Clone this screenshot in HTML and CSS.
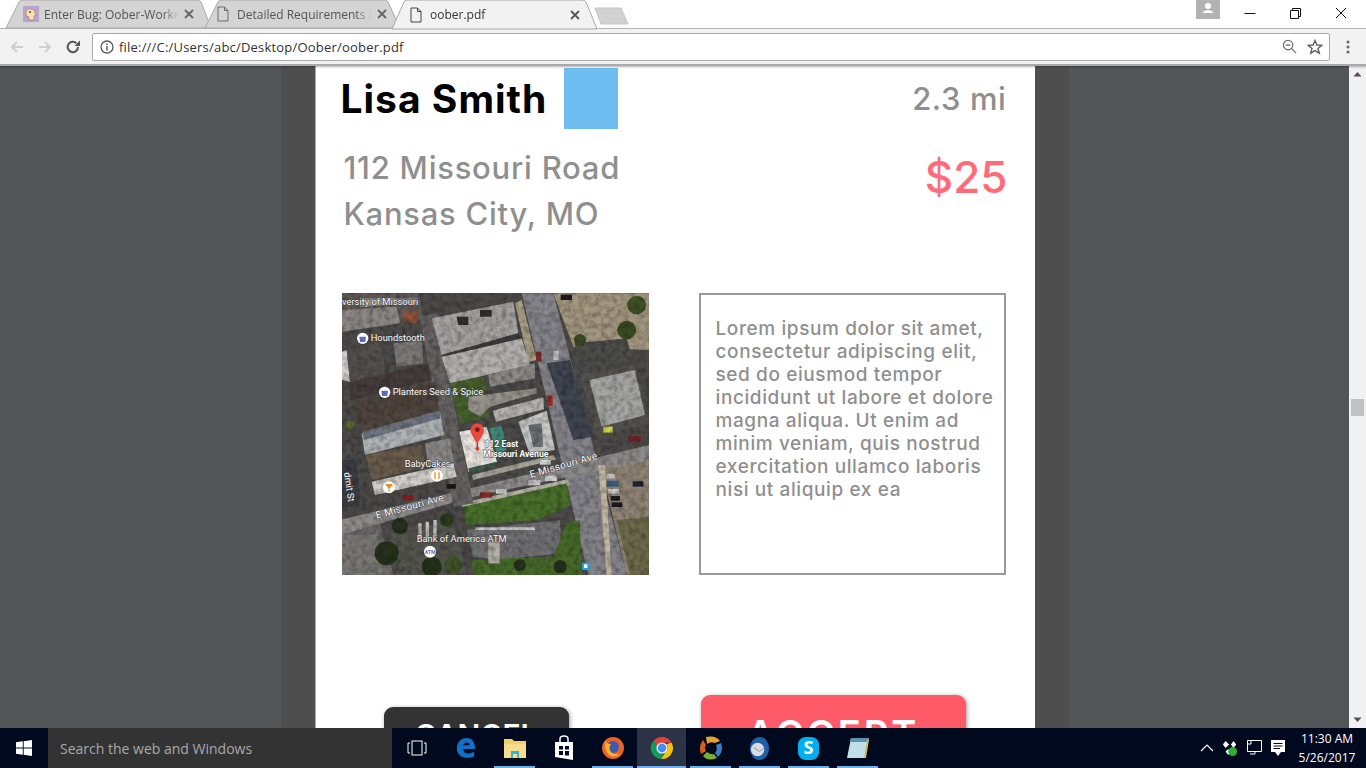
FILE: index.html
```html
<!DOCTYPE html>
<html lang="en">
<head>
    <meta charset="UTF-8">
    <title>oober.pdf</title>
    <link rel="stylesheet" href="styles.css">
</head>
<body>
    <div class="tabstrip">
        <div class="tab tab-first">
            <svg class="tab-shape" viewBox="0 0 205 28" preserveAspectRatio="none"><path d="M0 28 L13 2 Q14 0 17 0 L191 0 Q194 0 195 2 L205 28 Z" fill="#d4d4d4" stroke="#a8a8a8"/></svg>
            <svg class="favicon" viewBox="0 0 16 16"><rect width="16" height="16" fill="#b9a3cf"/><path d="M3 8 Q3 2 8 3 Q12 3 12 7 L13 9 L11 10 L11 14 L6 14 L6 11 Q3 11 3 8Z" fill="#f6e3b4" stroke="#a8743c" stroke-width=".6"/><circle cx="7" cy="6" r="1" fill="#50402c"/></svg>
            <span class="tab-title">Enter Bug: Oober-Worker</span>
            <svg class="tab-close" viewBox="0 0 10 10"><path d="M1 1 L9 9 M9 1 L1 9" stroke="#666" stroke-width="1.800"/></svg>
        </div>
        <div class="tab tab-second">
            <svg class="tab-shape" viewBox="0 0 195 28" preserveAspectRatio="none"><path d="M0 28 L13 2 Q14 0 17 0 L179 0 Q182 0 183 2 L195 28 Z" fill="#d4d4d4" stroke="#a8a8a8"/></svg>
            <svg class="doc-icon" viewBox="0 0 12 16"><path d="M1 1 H7.500 L11 4.500 V15 H1 Z M7.500 1 V4.500 H11" fill="none" stroke="#6c6c6c"/></svg>
            <span class="tab-title">Detailed Requirements Do</span>
            <svg class="tab-close tab-close-second" viewBox="0 0 10 10"><path d="M1 1 L9 9 M9 1 L1 9" stroke="#666" stroke-width="1.800"/></svg>
        </div>
        <div class="tab tab-active">
            <svg class="tab-shape" viewBox="0 0 205 29" preserveAspectRatio="none"><path d="M0 29 L12 2 Q13 0 16 0 L190 0 Q193 0 194 2 L205 29 Z" fill="#f2f2f2" stroke="#a8a8a8"/></svg>
            <svg class="doc-icon" viewBox="0 0 12 16"><path d="M1 1 H7.500 L11 4.500 V15 H1 Z M7.500 1 V4.500 H11" fill="none" stroke="#444"/></svg>
            <span class="tab-title tab-title-active">oober.pdf</span>
            <svg class="tab-close" viewBox="0 0 10 10"><path d="M1 1 L9 9 M9 1 L1 9" stroke="#555" stroke-width="1.800"/></svg>
        </div>
        <svg class="newtab" viewBox="0 0 35 18"><path d="M1 1 H27 L34 17 H7 Z" fill="#d2d2d2" stroke="#c4c4c4"/></svg>
        <div class="window-controls">
            <div class="profile"><svg viewBox="0 0 24 19" width="24" height="19"><circle cx="12" cy="6" r="3" fill="#fff"/><path d="M7 12 Q12 8 17 12 V13 H7 Z" fill="#fff"/></svg></div>
            <svg class="winbtn" viewBox="0 0 46 28"><path d="M18.500 13.500 H29.500" stroke="#111" stroke-width="1"/></svg>
            <svg class="winbtn" viewBox="0 0 46 28"><path d="M18.500 10.500 H26.500 V18.500 H18.500 Z M20.500 10 V8.500 H28.500 V16.500 H27" fill="none" stroke="#111"/></svg>
            <svg class="winbtn" viewBox="0 0 46 28"><path d="M18 8 L28 18 M28 8 L18 18" stroke="#111" stroke-width="1"/></svg>
        </div>
    </div>

    <div class="toolbar">
        <svg class="nav-icon" viewBox="0 0 16 16"><path d="M14 8 H3 M8 3 L3 8 L8 13" fill="none" stroke="#cfcfcf" stroke-width="2"/></svg>
        <svg class="nav-icon" viewBox="0 0 16 16"><path d="M2 8 H13 M8 3 L13 8 L8 13" fill="none" stroke="#cfcfcf" stroke-width="2"/></svg>
        <svg class="nav-icon" viewBox="0 0 16 16"><path d="M13 8 A5.200 5.200 0 1 1 11.400 4.200" fill="none" stroke="#555" stroke-width="2"/><path d="M9.500 7 H15 V1.500 Z" fill="#555"/></svg>
        <div class="omnibox">
            <svg class="info-icon" viewBox="0 0 14 14"><circle cx="7" cy="7" r="6" fill="none" stroke="#5a5a5a" stroke-width="1.300"/><path d="M7 6 V10.500 M7 3.500 V5" stroke="#5a5a5a" stroke-width="1.500"/></svg>
            <span class="url">file:///C:/Users/abc/Desktop/Oober/oober.pdf</span>
            <svg class="zoom-icon" viewBox="0 0 16 16"><circle cx="6.500" cy="6.500" r="5" fill="none" stroke="#6a6a6a" stroke-width="1.300"/><path d="M4 6.500 H9 M10 10 L15 15" stroke="#6a6a6a" stroke-width="1.300"/></svg>
            <svg class="star-icon" viewBox="0 0 16 16"><path d="M8 1.500 L9.900 6 L14.800 6.300 L11 9.400 L12.300 14.200 L8 11.600 L3.700 14.200 L5 9.400 L1.200 6.300 L6.100 6 Z" fill="none" stroke="#5f5f5f" stroke-width="1.400"/></svg>
        </div>
        <svg class="menu-icon" viewBox="0 0 4 16"><circle cx="2" cy="3" r="1.500" fill="#666"/><circle cx="2" cy="8" r="1.500" fill="#666"/><circle cx="2" cy="13" r="1.500" fill="#666"/></svg>
    </div>

    <div class="viewer">
        <div class="viewer-center">
            <div class="gutter"></div>
            <div class="paper">
                <div class="head-row">
                    <div class="name">Lisa Smith</div>
                    <div class="avatar"></div>
                    <div class="distance">2.3 mi</div>
                </div>
                <div class="address-row">
                    <div class="address">112 Missouri Road<br>Kansas City, MO</div>
                    <div class="price">$25</div>
                </div>
                <div class="detail-row">
                    <svg class="map" viewBox="6 9 921 846" width="307" height="282">
                        <defs>
                            <filter id="soft"><feGaussianBlur stdDeviation="1.600"/></filter>
                            <filter id="grain" x="0" y="0" width="100%" height="100%">
                                <feTurbulence type="fractalNoise" baseFrequency=".06" numOctaves="3" seed="7"/>
                                <feColorMatrix type="matrix" values="0 0 0 0 0  0 0 0 0 0  0 0 0 0 0  1.500 1.500 0 0 -1.200"/>
                                <feGaussianBlur stdDeviation="1.500"/>
                            </filter>
                        </defs>
                        <g filter="url(#soft)">
                            <rect x="0" y="0" width="940" height="860" fill="#4e4c4a"/>
                            <!-- lots -->
                            <path d="M640 10 H927 V180 L700 170 Z" fill="#a3977f"/>
                            <path d="M780 520 L927 500 V855 H860 Z" fill="#8f8474"/>
                            <path d="M830 690 L927 680 V855 H870 Z" fill="#6c6a4b"/>
                            <path d="M0 700 H120 L160 855 H0 Z" fill="#6d6b69"/>
                            <!-- roads -->
                            <path d="M545 10 H640 L860 855 H745 Z" fill="#85848a"/>
                            <path d="M620 220 L690 210 L760 440 L700 450 Z" fill="#3f4450"/>
                            <path d="M0 690 L927 465 V510 L400 620 L0 735 Z" fill="#8d8c8b"/>
                            <path d="M360 640 L682 568 L692 585 L372 655 Z" fill="#b5b2a8"/>
                            <path d="M395 555 L640 495 L648 508 L400 570 Z" fill="#a8a59b"/>
                            <path d="M775 525 L800 855 H815 L795 525 Z" fill="#c2b9a3"/>
                            <path d="M240 80 L290 70 L400 640 L340 650 Z" fill="#666462"/>
                            <path d="M0 735 H110 L130 855 H0 Z" fill="#7a7875"/>
                            <path d="M525 40 L545 30 L590 210 L565 215 Z" fill="#a89f86"/>
                            <!-- top centre roofs -->
                            <path d="M275 85 L520 35 L535 130 L305 195 Z" fill="#a5a3a1"/>
                            <path d="M305 200 L545 145 L570 225 L330 280 Z" fill="#b3b1ae"/>
                            <path d="M445 255 L585 220 L585 265 L450 290 Z" fill="#8d8b88"/>
                            <path d="M350 80 H385 V105 H355 Z M420 60 H455 V80 H420 Z" fill="#2e2d2c"/>
                            <path d="M305 195 L535 130 L545 145 L305 200 Z" fill="#3e3d3b"/>
                            <path d="M330 280 L430 260 L450 380 L360 400 Z" fill="#46622f"/>
                            <path d="M385 320 L590 295 L590 310 L450 350 L420 380 L385 360 Z" fill="#97948d"/>
                            <path d="M6 10 H240 L245 90 L6 120 Z" fill="#625a54"/>
                            <path d="M60 25 H230 V40 L60 50 Z" fill="#8e8c8a"/>
                            <path d="M6 60 L170 50 L180 100 L6 125 Z" fill="#8b8885"/>
                            <path d="M190 65 L235 65 L230 100 L195 95 Z" fill="#95513c"/>
                            <!-- left row of buildings -->
                            <path d="M6 185 L20 180 L30 275 L6 270 Z" fill="#cfcfcf"/>
                            <path d="M20 180 L125 155 L135 245 L30 275 Z" fill="#55514e"/>
                            <path d="M160 160 L245 150 L250 220 L170 230 Z" fill="#7b7976"/>
                            <path d="M20 280 L265 220 L275 270 L35 330 Z" fill="#443e3a"/>
                            <path d="M35 340 L285 275 L295 335 L50 395 Z" fill="#4f443e"/>
                            <path d="M50 395 L290 330 L300 365 L60 425 Z" fill="#514740"/>
                            <path d="M65 430 L300 365 L312 435 L75 495 Z" fill="#aeb3b6"/>
                            <path d="M66 425 L298 362 L302 385 L72 450 Z" fill="#6e7580"/>
                            <path d="M78 495 L245 465 L255 530 L95 570 Z" fill="#6b5c4d"/>
                            <path d="M255 460 L330 445 L340 515 L265 525 Z" fill="#8b8a88"/>
                            <path d="M95 575 L340 520 L350 560 L105 615 Z" fill="#d2cfca"/>
                            <path d="M6 510 H50 L62 650 H6 Z" fill="#3a3d42"/>
                            <!-- pin building -->
                            <path d="M358 425 L440 410 L472 520 L385 545 Z" fill="#ece6e2"/>
                            <path d="M385 535 L472 515 L475 528 L388 548 Z" fill="#3d5b4c"/>
                            <path d="M448 415 L486 408 L500 480 L470 490 Z" fill="#3f8a7a"/>
                            <path d="M458 362 L610 322 L612 358 L468 395 Z" fill="#b6b4b0"/>
                            <path d="M535 395 L620 362 L645 480 L568 490 Z" fill="#c7c9c9"/>
                            <path d="M565 405 L605 400 L610 470 L580 472 Z" fill="#6c6f73"/>
                            <!-- right building -->
                            <path d="M705 160 L860 145 L880 220 L715 240 Z" fill="#4d4d4c"/>
                            <path d="M720 250 L890 225 L925 400 L770 440 Z" fill="#55534f"/>
                            <path d="M748 270 L885 240 L915 375 L785 410 Z" fill="#a5a6a4"/>
                            <rect x="790" y="410" width="28" height="18" fill="#cfd64a"/>
                            <!-- green and lot -->
                            <path d="M370 650 L680 580 L692 645 L590 690 L380 705 Z" fill="#4a7029"/>
                            <path d="M150 720 L340 690 L380 855 H170 Z" fill="#55544f"/>
                            <path d="M380 720 L660 690 L665 790 L470 810 L400 800 Z" fill="#717072"/>
                            <path d="M395 810 L640 800 L680 700 L720 690 L725 855 H400 Z" fill="#466b2b"/>
                            <rect x="445" y="755" width="34" height="65" fill="#b5b1a9"/>
                            <!-- trees -->
                            <circle cx="140" cy="790" r="36" fill="#26331c"/>
                            <circle cx="320" cy="690" r="20" fill="#2a3a1d"/>
                            <circle cx="180" cy="708" r="24" fill="#26331c"/>
                            <circle cx="275" cy="830" r="30" fill="#26331c"/>
                            <circle cx="340" cy="825" r="26" fill="#3f5226"/>
                            <circle cx="860" cy="120" r="28" fill="#3a4d22"/>
                            <circle cx="890" cy="45" r="28" fill="#3f5226"/>
                            <circle cx="720" cy="150" r="18" fill="#3a4d22"/>
                            <circle cx="540" cy="825" r="18" fill="#26331c"/>
                            <circle cx="660" cy="830" r="20" fill="#26331c"/>
                            <circle cx="30" cy="405" r="12" fill="#5c6a2c"/>
                            <!-- cars -->
                            <rect x="188" y="615" width="32" height="16" fill="#8c1c22"/>
                            <rect x="420" y="607" width="36" height="16" fill="#8c2a2a"/>
                            <rect x="468" y="597" width="32" height="14" fill="#c9c9c9"/>
                            <rect x="565" y="570" width="36" height="16" fill="#d0d0d0"/>
                            <rect x="615" y="557" width="36" height="16" fill="#cfcfcf"/>
                            <rect x="600" y="510" width="32" height="14" fill="#e0e0e0"/>
                            <rect x="622" y="316" width="16" height="32" fill="#9c2a2a"/>
                            <rect x="588" y="185" width="16" height="30" fill="#7b2a2a"/>
                            <rect x="640" y="182" width="16" height="28" fill="#b9bcc0"/>
                            <rect x="600" y="40" width="20" height="32" fill="#9a9a9a"/>
                            <rect x="865" y="438" width="38" height="16" fill="#6e2427"/>
                            <rect x="800" y="572" width="36" height="18" fill="#3c5f80"/>
                            <rect x="800" y="552" width="24" height="14" fill="#bfbfbf"/>
                            <rect x="805" y="597" width="32" height="14" fill="#d0d0d0"/>
                            <rect x="812" y="618" width="28" height="14" fill="#1c1c1c"/>
                            <rect x="878" y="574" width="32" height="16" fill="#1e2530"/>
                            <rect x="815" y="637" width="32" height="14" fill="#1c1c1c"/>
                            <rect x="662" y="14" width="34" height="16" fill="#1e1e1e"/>
                            <rect x="320" y="582" width="28" height="14" fill="#1c1c1c"/>
                            <path d="M405 712 H585 V720 H405 Z" fill="#c9c9c9"/>
                            <path d="M240 700 V745 M262 695 V745 M285 690 V740" stroke="#c0c0c0" stroke-width="10"/>
                        </g>
                        <rect class="map-grain" x="6" y="9" width="921" height="846" filter="url(#grain)"/>
                        <circle cx="68" cy="145" r="17" fill="#fff"/><path d="M58 140 H78 L76 156 H60 Z" fill="#5c6bc0"/>
                        <circle cx="134" cy="307" r="17" fill="#fff"/><path d="M124 302 H144 L142 318 H126 Z" fill="#5c6bc0"/>
                        <circle cx="291" cy="557" r="18" fill="#fff"/><path d="M285 547 V567 M297 547 V567" stroke="#ef8a1e" stroke-width="4"/>
                        <circle cx="147" cy="592" r="18" fill="#fff"/><path d="M137 583 H157 L147 595 Z M147 595 V606" fill="#ef8a1e" stroke="#ef8a1e" stroke-width="3"/>
                        <circle cx="270" cy="785" r="18" fill="#fff"/><text class="map-atm" x="270" y="791" text-anchor="middle">ATM</text>
                        <rect x="726" y="818" width="22" height="22" rx="3" fill="#1fa5e0"/><rect x="732" y="823" width="10" height="11" fill="#fff"/>
                        <path d="M412 481 V450" stroke="#b92d25" stroke-width="4"/><circle cx="412" cy="476" r="6" fill="#d9382c"/>
                        <path d="M412 462 C400 440 392 432 392 420 A20 20 0 1 1 432 420 C432 432 424 440 412 462Z" fill="#e8493d"/>
                        <circle cx="412" cy="419" r="7" fill="#7c1a14"/>
                        <text class="map-label" x="6" y="44">versity of Missouri</text>
                        <text class="map-label" x="92" y="152">Houndstooth</text>
                        <text class="map-label" x="158" y="316">Planters Seed &amp; Spice</text>
                        <text class="map-label" x="194" y="530">BabyCakes</text>
                        <text class="map-label" x="230" y="755">Bank of America ATM</text>
                        <text class="map-label map-label-bold" x="433" y="470">112 East</text>
                        <text class="map-label map-label-bold" x="430" y="500">Missouri Avenue</text>
                        <text class="map-label map-label-road" transform="translate(110 686) rotate(-15)">E Missouri Ave</text>
                        <text class="map-label map-label-road" transform="translate(572 564) rotate(-16)">E Missouri Ave</text>
                        <text class="map-label" transform="translate(12 548) rotate(82)">dmit St</text>
                    </svg>
                    <div class="notes">Lorem ipsum dolor sit amet, consectetur adipiscing elit, sed do eiusmod tempor incididunt ut labore et dolore magna aliqua. Ut enim ad minim veniam, quis nostrud exercitation ullamco laboris nisi ut aliquip ex ea</div>
                </div>
                <div class="button-row">
                    <div class="btn btn-cancel">CANCEL</div>
                    <div class="btn btn-accept">ACCEPT</div>
                </div>
            </div>
            <div class="gutter"></div>
        </div>
        <div class="scrollbar">
            <svg class="scroll-arrow" viewBox="0 0 17 17"><path d="M4.500 10.500 L8.500 6 L12.500 10.500 Z" fill="#505050"/></svg>
            <div class="scroll-track"><div class="scroll-thumb"></div></div>
            <svg class="scroll-arrow" viewBox="0 0 17 17"><path d="M4.500 6.500 L8.500 11 L12.500 6.500 Z" fill="#505050"/></svg>
        </div>
    </div>

    <div class="taskbar">
        <div class="start"><svg viewBox="0 0 16 16" width="16" height="16"><path d="M0 2.300 L6.800 1.300 V7.500 H0 Z M7.700 1.200 L16 0 V7.500 H7.700 Z M0 8.500 H6.800 V14.700 L0 13.700 Z M7.700 8.500 H16 V16 L7.700 14.800 Z" fill="#fff"/></svg></div>
        <div class="search">Search the web and Windows</div>
        <div class="task-icons">
            <div class="task-item"><svg viewBox="0 0 20 16" width="20" height="16"><rect x="5" y="1" width="10" height="14" fill="none" stroke="#fff"/><path d="M3 3 H1 V13 H3 M17 3 H19 V13 H17" fill="none" stroke="#fff"/></svg></div>
            <div class="task-item"><svg viewBox="0 0 22 24" width="20" height="24"><path d="M1 13 C1 4 7 1 12 1 C18 1 21 6 21 13 H8 C8 18 14 20 20 16 V21 C12 25 1 22 1 13 Z M8 9 H15 C15 5 9 5 8 9 Z" fill="#0f72c8"/></svg></div>
            <div class="task-item task-open"><svg viewBox="0 0 22 22" width="22" height="22"><path d="M0 2 H8 L10 4 H22 V21 H0 Z" fill="#f2cf6b"/><path d="M0 7 H22 V21 H0 Z" fill="#f7dd8c"/><path d="M7 14 H15 V21 H7 Z" fill="#2fb4e0"/><path d="M9 17 H13 V21 H9Z" fill="#f7dd8c"/></svg></div>
            <div class="task-item"><svg viewBox="0 0 20 26" width="20" height="26"><path d="M1 7 H19 V25 L1 22 Z" fill="#fff"/><path d="M6 7 V4 Q6 1 10 1 Q14 1 14 4 V7" fill="none" stroke="#fff" stroke-width="1.500"/><path d="M5 11 H9 V14.500 H5 Z M11 11 H15 V14.500 H11 Z M5 16 H9 V20 H5 Z M11 16 H15 V20.500 H11 Z" fill="#01091f"/></svg></div>
            <div class="task-item task-open"><svg viewBox="0 0 24 24" width="24" height="24"><circle cx="12" cy="12" r="11" fill="#e8622a"/><circle cx="12" cy="11" r="6" fill="#3b5bb0"/><path d="M4 5 Q3 14 8 19 Q14 23 20 17 Q14 20 10 16 Q7 12 10 8 Q6 8 4 5Z" fill="#f7b32b"/></svg></div>
            <div class="task-item task-active"><svg viewBox="0 0 24 24" width="24" height="24"><path d="M12 1 A11 11 0 0 1 21.600 6.700 L12 6.700 A5.500 5.500 0 0 0 6.800 10 L3.800 4.500 A11 11 0 0 1 12 1Z" fill="#dc4437"/><path d="M21.600 6.700 A11 11 0 0 1 11 23 L15.900 15.500 A5.500 5.500 0 0 0 16.500 8 Z" fill="#f4c20d"/><path d="M3.800 4.500 A11 11 0 0 0 11 23 L14 16.800 A5.500 5.500 0 0 1 6.800 10 Z" fill="#109d58"/><circle cx="12" cy="12" r="5" fill="#4a8af4" stroke="#fff" stroke-width="1.200"/></svg></div>
            <div class="task-item task-open"><svg viewBox="0 0 24 24" width="24" height="24"><path d="M7 1 Q17 -1 21 5 L16 7 Q11 5 8 8 Z" fill="#e8a32a"/><path d="M22 7 Q25 15 19 21 L16 17 Q19 13 17 9 Z" fill="#3c7fc0"/><path d="M18 22 Q9 26 4 20 L8 16 Q12 19 15 18 Z" fill="#7bb02e"/><path d="M2 18 Q-1 10 4 4 L7 9 Q5 12 7 15 Z" fill="#d85a24"/></svg></div>
            <div class="task-item task-open"><svg viewBox="0 0 24 26" width="23" height="25"><ellipse cx="12" cy="13" rx="10" ry="12" fill="#1f5fa8"/><ellipse cx="10" cy="14" rx="7" ry="7" fill="#d9dde2"/><path d="M6 12 L12 16 L17 12" fill="none" stroke="#8a8f96"/></svg></div>
            <div class="task-item task-open"><svg viewBox="0 0 24 26" width="23" height="25"><rect x="1" y="1" width="22" height="24" rx="8" fill="#00aff0"/><text class="skype-s" x="12" y="19" text-anchor="middle">S</text></svg></div>
            <div class="task-item task-open"><svg viewBox="0 0 24 26" width="24" height="26"><path d="M5 3 H23 L19 23 H1 Z" fill="#bfe0e8"/><path d="M5 3 H23 L22 7 H4 Z" fill="#5c93b0"/><path d="M21 5 L23 5 L20 23 H18Z" fill="#d9b46a"/></svg></div>
        </div>
        <div class="tray">
            <svg viewBox="0 0 14 8" width="14" height="8"><path d="M1 7 L7 1 L13 7" fill="none" stroke="#fff" stroke-width="1.200"/></svg>
            <svg viewBox="0 0 18 20" width="16" height="20"><path d="M4 2 L8 6 L4 10 L1 6 Z M13 2 L16 6 L13 10 L10 6 Z M7 11 L10 14 L7 18 L4 14Z" fill="#fff"/><circle cx="12" cy="14" r="5" fill="#2fae3c"/></svg>
            <svg viewBox="0 0 16 18" width="16" height="18"><path d="M1.500 1.500 H15.500 V12.500 H1.500 Z M9 12.500 V15 H4 M1.500 5 H5 V1.500" fill="none" stroke="#fff"/></svg>
            <svg viewBox="0 0 16 18" width="16" height="18"><path d="M1 1 H15 V13 H11 L8 17 L5 13 H1 Z" fill="#fff"/><path d="M3.500 4.500 H12.500 M3.500 7 H12.500 M3.500 9.500 H10" stroke="#01091f"/></svg>
            <div class="clock"><div>11:30 AM</div><div>5/26/2017</div></div>
        </div>
    </div>
</body>
</html>
```

FILE: styles.css
```css
html, body {
    margin: 0;
    height: 100%;
}
body {
    width: 1366px;
    height: 768px;
    overflow: hidden;
    display: flex;
    flex-direction: column;
    font-family: "Open Sans", "Noto Sans", sans-serif;
    background-color: #fff;
}

/* tabs */
.tabstrip {
    height: 28px;
    display: flex;
    align-items: flex-start;
    padding-left: 6px;
    background-color: #fff;
    flex-shrink: 0;
    position: relative;
    z-index: 2;
}
.tab {
    position: relative;
    height: 28px;
    display: flex;
    align-items: center;
    font-size: 12px;
    color: #555;
    box-sizing: border-box;
}
.tab-shape {
    position: absolute;
    top: 0;
    left: 0;
    width: 100%;
    height: 100%;
    overflow: visible;
}
.tab-first {
    width: 205px;
    padding-left: 17px;
}
.tab-second {
    width: 195px;
    margin-left: -6px;
    padding-left: 12px;
}
.tab-active {
    width: 205px;
    margin-left: -8px;
    height: 29px;
    padding-left: 18px;
    z-index: 1;
}
.favicon {
    position: relative;
    width: 16px;
    height: 16px;
    margin-right: 5px;
    flex-shrink: 0;
}
.doc-icon {
    position: relative;
    width: 12px;
    height: 16px;
    margin-right: 8px;
    flex-shrink: 0;
}
.tab-title {
    position: relative;
    flex: 1;
    overflow: hidden;
    white-space: nowrap;
    -webkit-mask-image: linear-gradient(to right, #000 88%, transparent);
    mask-image: linear-gradient(to right, #000 88%, transparent);
}
.tab-title-active {
    color: #333;
}
.tab-close {
    position: relative;
    width: 10px;
    height: 10px;
    margin: 0 17px 0 5px;
    flex-shrink: 0;
}
.tab-close-second {
    margin-right: 13px;
}
.newtab {
    width: 35px;
    height: 18px;
    margin: 7px 0 0 -3px;
}
.window-controls {
    margin-left: auto;
    padding-right: 2px;
    display: flex;
    align-items: flex-start;
    height: 28px;
}
.profile {
    width: 24px;
    height: 19px;
    margin-right: 6px;
    background-color: #b3b3b3;
}
.winbtn {
    width: 46px;
    height: 28px;
}

/* toolbar */
.toolbar {
    height: 38px;
    box-sizing: border-box;
    display: flex;
    align-items: center;
    padding: 0 16px 0 9px;
    background-color: #f2f2f2;
    border-top: 1px solid #b4b4b4;
    border-bottom: 2px solid #a9a9a9;
    flex-shrink: 0;
    position: relative;
    z-index: 1;
    box-shadow: 0 1px 2px rgba(0, 0, 0, 0.3);
}
.nav-icon {
    width: 16px;
    height: 16px;
    margin-right: 12px;
}
.omnibox {
    flex: 1;
    height: 28px;
    margin: 0 16px 0 -1px;
    box-sizing: border-box;
    display: flex;
    align-items: center;
    padding: 0 6px 0 7px;
    background-color: #fff;
    border: 1px solid #aaa;
    border-radius: 2px;
}
.info-icon {
    width: 14px;
    height: 14px;
    margin-right: 5px;
}
.url {
    flex: 1;
    font-size: 13px;
    letter-spacing: 0.2px;
    color: #333;
}
.zoom-icon {
    width: 15px;
    height: 15px;
    margin-right: 10px;
}
.star-icon {
    width: 16px;
    height: 16px;
}
.menu-icon {
    width: 4px;
    height: 16px;
}

/* pdf viewer */
.viewer {
    flex: 1;
    min-height: 0;
    display: flex;
    overflow: hidden;
    background-color: #525659;
}
.viewer-center {
    flex: 1;
    display: flex;
    justify-content: center;
}
.gutter {
    width: 34px;
    background-color: #4e4e4e;
}
.paper {
    width: 720px;
    height: 760px;
    box-sizing: border-box;
    padding: 2px 29px 0 26px;
    background-color: #fff;
    border-left: 1px solid #aaa;
    font-family: Inter, "Liberation Sans", sans-serif;
    color: #8f8f8f;
}
.head-row {
    display: flex;
    align-items: flex-start;
}
.name {
    margin-top: 7px;
    margin-left: -1px;
    font-size: 39px;
    line-height: 48px;
    font-weight: 700;
    letter-spacing: 1px;
    color: #000;
}
.avatar {
    width: 54px;
    height: 61px;
    margin-left: 17px;
    background-color: #6fbdf0;
}
.distance {
    margin-left: auto;
    margin-right: -1px;
    margin-top: 8px;
    font-size: 31px;
    line-height: 46px;
    font-weight: 500;
    letter-spacing: 0.6px;
}
.address-row {
    display: flex;
    justify-content: space-between;
    margin-top: 16px;
    padding-left: 2px;
}
.address {
    font-size: 31px;
    line-height: 46px;
    font-weight: 500;
    letter-spacing: 0.75px;
}
.price {
    margin-top: 4px;
    margin-right: -2px;
    font-size: 44px;
    line-height: 56px;
    font-weight: 500;
    color: #ff6b78;
}
.detail-row {
    display: flex;
    justify-content: space-between;
    align-items: flex-start;
    margin-top: 56px;
}
.map {
    display: block;
    flex-shrink: 0;
}
.map-grain {
    fill: #000;
    opacity: 0.28;
}
.map-label {
    font-family: Roboto, sans-serif;
    font-size: 28px;
    fill: #fff;
    stroke: #3a3a3a;
    stroke-width: 2.500px;
    paint-order: stroke;
}
.map-label-bold {
    font-weight: 700;
    font-size: 26px;
}
.map-label-road {
    font-size: 30px;
    letter-spacing: 1px;
}
.map-atm {
    font-family: Roboto, sans-serif;
    font-size: 15px;
    font-weight: 700;
    fill: #5c6bc0;
}
.notes {
    width: 307px;
    height: 282px;
    box-sizing: border-box;
    padding: 22px 8px 0 15px;
    border: 2px solid #999;
    font-size: 19px;
    line-height: 23px;
    font-weight: 500;
    letter-spacing: 0.6px;
}
.button-row {
    display: flex;
    align-items: flex-start;
    margin-top: 120px;
    padding-left: 42px;
}
.btn {
    box-sizing: border-box;
    color: #fff;
    font-weight: 600;
    text-align: center;
    border-radius: 9px;
    box-shadow: 1px 1px 4px rgba(0, 0, 0, 0.4);
}
.btn-cancel {
    width: 185px;
    height: 70px;
    margin-top: 12px;
    padding-top: 10px;
    font-size: 30px;
    background-color: #333;
}
.btn-accept {
    width: 265px;
    height: 80px;
    margin-left: 132px;
    padding-top: 16px;
    font-size: 38px;
    letter-spacing: 3px;
    background-color: #ff5a68;
}

.scrollbar {
    width: 17px;
    display: flex;
    flex-direction: column;
    background-color: #f1f1f1;
    flex-shrink: 0;
}
.scroll-arrow {
    width: 17px;
    height: 17px;
}
.scroll-track {
    flex: 1;
    padding-top: 316px;
}
.scroll-thumb {
    width: 13px;
    height: 17px;
    margin-left: 2px;
    background-color: #c1c1c1;
}

/* windows taskbar */
.taskbar {
    height: 40px;
    display: flex;
    align-items: stretch;
    background-color: #01091f;
    flex-shrink: 0;
    position: relative;
    z-index: 2;
}
.start {
    width: 48px;
    display: flex;
    align-items: center;
    justify-content: center;
}
.search {
    width: 344px;
    box-sizing: border-box;
    padding-left: 12px;
    display: flex;
    align-items: center;
    font-size: 14px;
    color: #a9a9a9;
    background-color: #333;
}
.task-icons {
    display: flex;
}
.task-item {
    width: 49px;
    display: flex;
    align-items: center;
    justify-content: center;
    position: relative;
}
.task-open::after,
.task-active::after {
    content: "";
    position: absolute;
    left: 4px;
    right: 4px;
    bottom: 0;
    height: 2px;
    background-color: #6cb0ea;
}
.task-active {
    background-color: #2c3347;
}
.task-active::after {
    left: 0;
    right: 0;
}
.skype-s {
    font-family: "Open Sans", sans-serif;
    font-size: 19px;
    font-weight: 700;
    fill: #fff;
}
.tray {
    margin-left: auto;
    display: flex;
    align-items: center;
    gap: 8px;
    padding-right: 8px;
}
.clock {
    width: 62px;
    margin-left: 2px;
    font-size: 12px;
    line-height: 19px;
    color: #fff;
    text-align: center;
}
```
